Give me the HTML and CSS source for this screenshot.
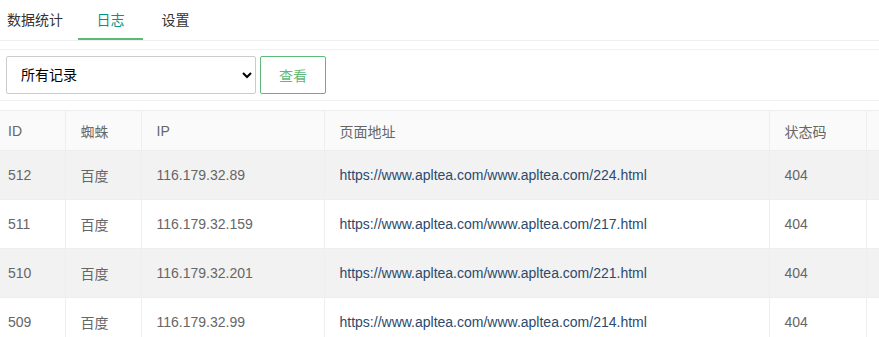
FILE: index.html
```html
<!DOCTYPE html>
<html lang="zh-CN">
<head>
    <meta charset="UTF-8">
    <meta name="viewport" content="width=device-width, initial-scale=1.0">
    <title>日志</title>
    <link rel="stylesheet" href="styles.css">
</head>
<body>
    <ul class="tab-title">
        <li>数据统计</li>
        <li class="this">日志</li>
        <li>设置</li>
    </ul>
    <div class="filter">
        <select class="select">
            <option>所有记录</option>
            <option>百度</option>
            <option>谷歌</option>
        </select>
        <button class="btn">查看</button>
    </div>
    <table class="log-table">
        <colgroup>
            <col class="c-id">
            <col class="c-spider">
            <col class="c-ip">
            <col class="c-url">
            <col class="c-code">
            <col class="c-more">
        </colgroup>
        <thead>
            <tr><th>ID</th><th>蜘蛛</th><th>IP</th><th>页面地址</th><th>状态码</th><th></th></tr>
        </thead>
        <tbody>
            <tr><td>512</td><td>百度</td><td>116.179.32.89</td><td><a href="#">https://www.apltea.com/www.apltea.com/224.html</a></td><td>404</td><td></td></tr>
            <tr><td>511</td><td>百度</td><td>116.179.32.159</td><td><a href="#">https://www.apltea.com/www.apltea.com/217.html</a></td><td>404</td><td></td></tr>
            <tr><td>510</td><td>百度</td><td>116.179.32.201</td><td><a href="#">https://www.apltea.com/www.apltea.com/221.html</a></td><td>404</td><td></td></tr>
            <tr><td>509</td><td>百度</td><td>116.179.32.99</td><td><a href="#">https://www.apltea.com/www.apltea.com/214.html</a></td><td>404</td><td></td></tr>
        </tbody>
    </table>
</body>
</html>
```

FILE: styles.css
```css
body {
    font-family: "Liberation Sans", Arial, "Noto Sans CJK SC", sans-serif;
    font-size: 14px;
    color: #666;
    margin: 0;
    padding: 0;
    background-color: #fff;
    overflow: hidden;
}
.tab-title {
    list-style: none;
    display: flex;
    margin: 0 0 8px 0;
    padding: 0;
    height: 40px;
    border-bottom: 1px solid #eee;
}
.tab-title li {
    min-width: 65px;
    padding: 0 15px;
    box-sizing: border-box;
    line-height: 40px;
    text-align: center;
    color: #333;
}
.tab-title li:first-child {
    padding-left: 7px;
}
.tab-title li.this {
    color: #009688;
    border-bottom: 2px solid #5FB878;
}
.filter {
    display: flex;
    gap: 4px;
    padding: 6px;
    border-top: 1px solid #f0f0f0;
    border-bottom: 1px solid #f0f0f0;
    margin-bottom: 9px;
}
.select {
    width: 250px;
    height: 38px;
    padding: 0 10px;
    font-family: inherit;
    font-size: 14px;
    color: #000;
    background: #fff;
    border: 1px solid #ccc;
    border-radius: 2px;
}
.btn {
    width: 66px;
    height: 38px;
    font-family: inherit;
    font-size: 14px;
    color: #5FB878;
    background: #fff;
    border: 1px solid #5FB878;
    border-radius: 2px;
}
.log-table {
    border-collapse: collapse;
    table-layout: fixed;
    width: 879px;
}
.c-id { width: 65px; }
.c-spider { width: 76px; }
.c-ip { width: 183px; }
.c-url { width: 445px; }
.c-code { width: 97px; }
.c-more { width: 13px; }
.log-table th,
.log-table td {
    text-align: left;
    font-weight: normal;
    padding: 0 15px;
    border: 1px solid #eee;
    white-space: nowrap;
    overflow: hidden;
}
.log-table tr > :first-child {
    padding-left: 8px;
    border-left: none;
}
.log-table tr > :last-child {
    padding: 0;
}
.log-table th {
    height: 39px;
    background: #fafafa;
}
.log-table td {
    height: 48px;
}
.log-table tbody tr:nth-child(odd) {
    background: #f2f2f2;
}
.log-table a {
    color: #2c4a6e;
    text-decoration: none;
}
```
